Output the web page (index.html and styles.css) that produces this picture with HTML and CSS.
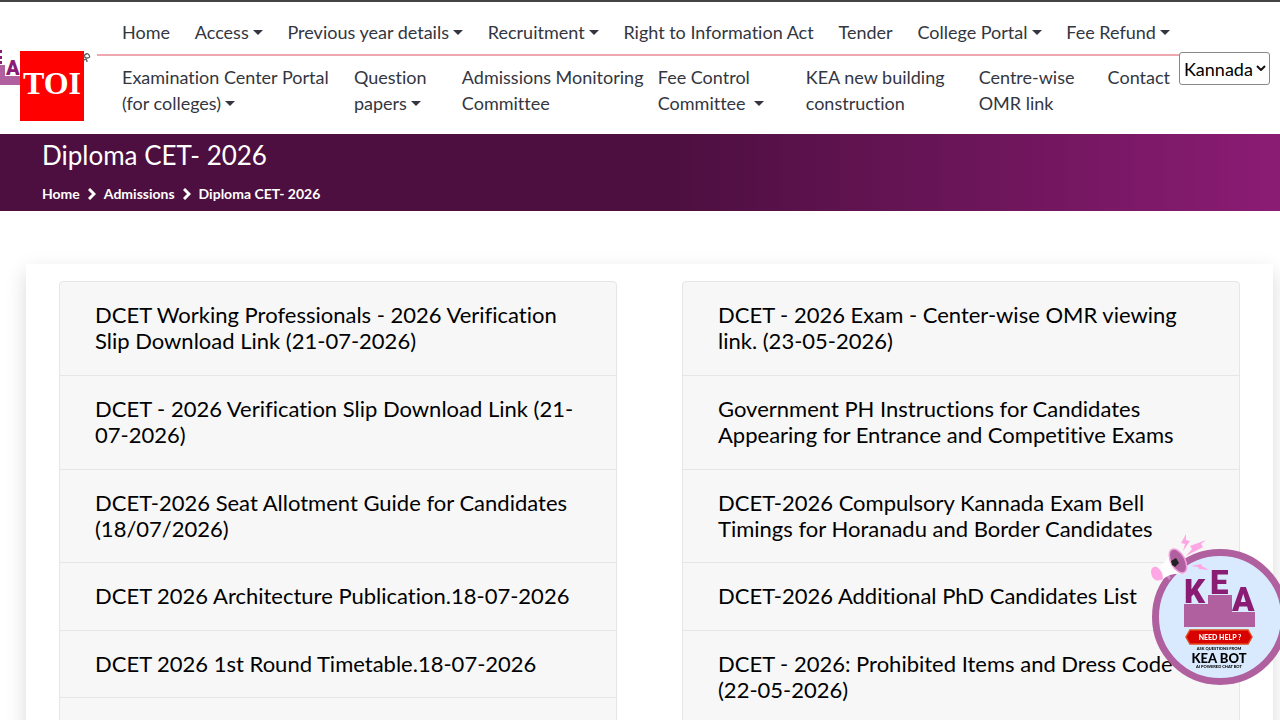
FILE: index.html
```html
<!DOCTYPE html>
<html lang="en">
<head>
  <meta charset="UTF-8">
  <meta name="viewport" content="width=device-width, initial-scale=1.0">
  <title>Diploma CET- 2026</title>
  <link rel="stylesheet" href="styles.css">
</head>
<body>
  <header class="site-header">
    <div class="brand">
      <svg class="kea-logo" viewBox="0 0 97 132" aria-hidden="true">
        <path d="M0 65h5v11h15v9H0z" fill="#b0609f"/>
        <path d="M0 50h2v3H0zM0 56h2v3H0zM0 61h2v3H0z" fill="#8b1c74"/>
        <text x="6" y="75" class="logo-letter" font-size="20">A</text>
        <path d="M84 56q3-4 5-1t-2 3q-3 0-2-2M84 60q3-2 3 2" fill="none" stroke="#555" stroke-width="1.3"/>
      </svg>
      <div class="toi-badge">TOI</div>
    </div>
    <nav class="main-nav">
      <div class="nav-row">
        <a href="#">Home</a>
        <a href="#" class="dropdown">Access</a>
        <a href="#" class="dropdown">Previous year details</a>
        <a href="#" class="dropdown">Recruitment</a>
        <a href="#">Right to Information Act</a>
        <a href="#">Tender</a>
        <a href="#" class="dropdown">College Portal</a>
        <a href="#" class="dropdown">Fee Refund</a>
      </div>
      <div class="nav-grid">
        <a href="#" class="dropdown">Examination Center Portal (for colleges)</a>
        <a href="#" class="dropdown">Question papers</a>
        <a href="#">Admissions Monitoring Committee</a>
        <a href="#" class="dropdown">Fee Control Committee&nbsp;</a>
        <a href="#">KEA new building construction</a>
        <a href="#">Centre-wise OMR link</a>
        <a href="#">Contact</a>
      </div>
    </nav>
    <div class="language">
      <select aria-label="Language">
        <option>Kannada</option>
      </select>
      <svg viewBox="0 0 10 6" aria-hidden="true"><path d="M1 1l4 4 4-4"/></svg>
    </div>
  </header>

  <section class="banner">
    <h1>Diploma CET- 2026</h1>
    <div class="breadcrumb">
      <a href="#">Home</a>
      <svg viewBox="0 0 8 12"><path d="M1 1l5 5-5 5"/></svg>
      <a href="#">Admissions</a>
      <svg viewBox="0 0 8 12"><path d="M1 1l5 5-5 5"/></svg>
      <span>Diploma CET- 2026</span>
    </div>
  </section>

  <main class="panel">
    <ul class="link-list">
      <li><a href="#">DCET Working Professionals - 2026 Verification Slip Download Link (21-07-2026)</a></li>
      <li><a href="#">DCET - 2026 Verification Slip Download Link (21-07-2026)</a></li>
      <li><a href="#">DCET-2026 Seat Allotment Guide for Candidates (18/07/2026)</a></li>
      <li><a href="#">DCET 2026 Architecture Publication.18-07-2026</a></li>
      <li><a href="#">DCET 2026 1st Round Timetable.18-07-2026</a></li>
    </ul>
    <ul class="link-list">
      <li><a href="#">DCET - 2026 Exam - Center-wise OMR viewing link. (23-05-2026)</a></li>
      <li><a href="#">Government PH Instructions for Candidates Appearing for Entrance and Competitive Exams</a></li>
      <li><a href="#">DCET-2026 Compulsory Kannada Exam Bell Timings for Horanadu and Border Candidates</a></li>
      <li><a href="#">DCET-2026 Additional PhD Candidates List</a></li>
      <li><a href="#">DCET - 2026: Prohibited Items and Dress Code (22-05-2026)</a></li>
    </ul>
  </main>

  <button class="chat-bot" type="button">
    <svg viewBox="1150 533 140 153">
      <circle cx="1220" cy="617" r="64.500" fill="#d9eaff" stroke="#b0609f" stroke-width="7"/>
      <!-- letters on the podium -->
      <path d="M1184 604h24v-9h24v17h23v15h-71z" fill="#b0609f"/>
      <g class="logo-letter" font-size="33">
        <text x="1184" y="603">K</text>
        <text x="1210" y="594">E</text>
        <text x="1232" y="611">A</text>
      </g>
      <path d="M1190 630h58l4 7-4 7h-58l-4-7z" fill="#d90000" stroke="#e0491f" stroke-width="1.500"/>
      <g class="bot-text">
        <text x="1220" y="640" font-size="7" fill="#fff">NEED HELP ?</text>
        <text x="1219" y="650" font-size="4">ASK QUESTIONS FROM</text>
        <text x="1219" y="663" font-size="13">KEA BOT</text>
        <text x="1219" y="668" font-size="4">AI POWERED CHAT BOT</text>
      </g>
      <!-- megaphone -->
      <path d="M1166 576l3 4 2-2-2-4z" fill="#c98bc0"/>
      <path d="M1156 568q11-4 15-18l14 24q-14-2-23 6z" fill="#fff"/>
      <path d="M1151 571q1-5 6-4q6 4 6 12q-6 3-9 0t-3-8z" fill="#ffa6e4"/>
      <ellipse cx="1178" cy="561" rx="7" ry="13" transform="rotate(-28 1178 561)" fill="#b0609f" stroke="#f39fdc" stroke-width="1.500"/>
      <path d="M1171 561l5-3 3 5-4 4-3-2z" fill="#222"/>
      <path d="M1186 534l-5 9 4 1-2 7 7-10-4-1zM1206 540l-16 6 2 3-6 7 17-9-2-3zM1191 566l10-2 1 2 7 4-10-1-1-2z" fill="#ffa6e4"/>
    </svg>
  </button>
</body>
</html>
```
FILE: styles.css
```css
* {
  box-sizing: border-box;
}
body {
  margin: 0;
  font-family: Lato, "Liberation Sans", sans-serif;
  font-size: 18px;
  font-variant-ligatures: none;
  color: #33363f;
  background-color: #fff;
}
a {
  color: inherit;
  text-decoration: none;
}
.site-header {
  display: flex;
  align-items: flex-start;
  border-top: 2px solid #444;
  padding-right: 10px;
}
.brand {
  position: relative;
  flex: 0 0 97px;
}
.kea-logo {
  display: block;
  width: 97px;
  margin-top: -2px;
}
.logo-letter {
  font-family: Roboto, "Liberation Sans", sans-serif;
  font-weight: 900;
  fill: #8b1c74;
}
.toi-badge {
  position: absolute;
  top: 49px;
  left: 20px;
  width: 64px;
  height: 70px;
  background-color: #f00;
  color: #fff;
  font-family: "Liberation Serif", serif;
  font-size: 32px;
  font-weight: bold;
  line-height: 64px;
  text-align: center;
}
.main-nav {
  flex: 1;
  line-height: 26px;
}
.nav-row {
  display: flex;
  justify-content: space-between;
  padding: 17px 9px 9px 25px;
  border-bottom: 2px solid #f0a8b0;
}
.nav-grid {
  display: grid;
  grid-template-columns: 232fr 108fr 196fr 148fr 173fr 129fr 62fr;
  padding: 8px 9px 18px 25px;
}
.dropdown::after {
  content: "";
  display: inline-block;
  margin-left: 4px;
  vertical-align: 4px;
  border-top: 5px solid;
  border-left: 5px solid transparent;
  border-right: 5px solid transparent;
}
.language {
  position: relative;
  margin-top: 50px;
}
.language select {
  appearance: none;
  display: block;
  width: 91px;
  height: 33px;
  padding: 0 4px;
  border: 1px solid #888;
  border-radius: 3px;
  background-color: #fff;
  color: #000;
  font: inherit;
}
.language svg {
  position: absolute;
  top: 13px;
  right: 4px;
  width: 10px;
  fill: none;
  stroke: #111;
  stroke-width: 2;
  pointer-events: none;
}
.banner {
  padding: 4px 42px 7px;
  background: linear-gradient(90deg, #4c0f3f 52%, #8b1c74);
  color: #fff;
}
.banner h1 {
  margin: 0 0 11px;
  font-size: 26px;
  font-weight: normal;
  line-height: 34px;
}
.breadcrumb {
  display: flex;
  align-items: center;
  gap: 8px;
  font-size: 14px;
  font-weight: bold;
  line-height: 21px;
}
.breadcrumb svg {
  width: 8px;
  height: 12px;
  fill: none;
  stroke: #fff;
  stroke-width: 3;
}
.panel {
  display: grid;
  grid-template-columns: 1fr 1fr;
  gap: 65px;
  margin: 53px 7px 0 26px;
  padding: 17px 33px;
  box-shadow: 0 8px 20px rgba(0, 0, 0, 0.15);
}
.link-list {
  margin: 0;
  padding: 0;
  list-style: none;
  border: 1px solid #e6e6e6;
  border-radius: 4px;
  background-color: #f7f7f7;
  color: #000;
  font-size: 22px;
  line-height: 1.2;
}
.link-list li {
  padding: 20px 35px;
  border-bottom: 1px solid #e6e6e6;
}
.chat-bot {
  position: fixed;
  right: -10px;
  bottom: 34px;
  padding: 0;
  border: none;
  background: none;
  font-family: inherit;
  cursor: pointer;
}
.chat-bot svg {
  display: block;
  width: 140px;
}
.bot-text {
  font-weight: 900;
  text-anchor: middle;
}
```
